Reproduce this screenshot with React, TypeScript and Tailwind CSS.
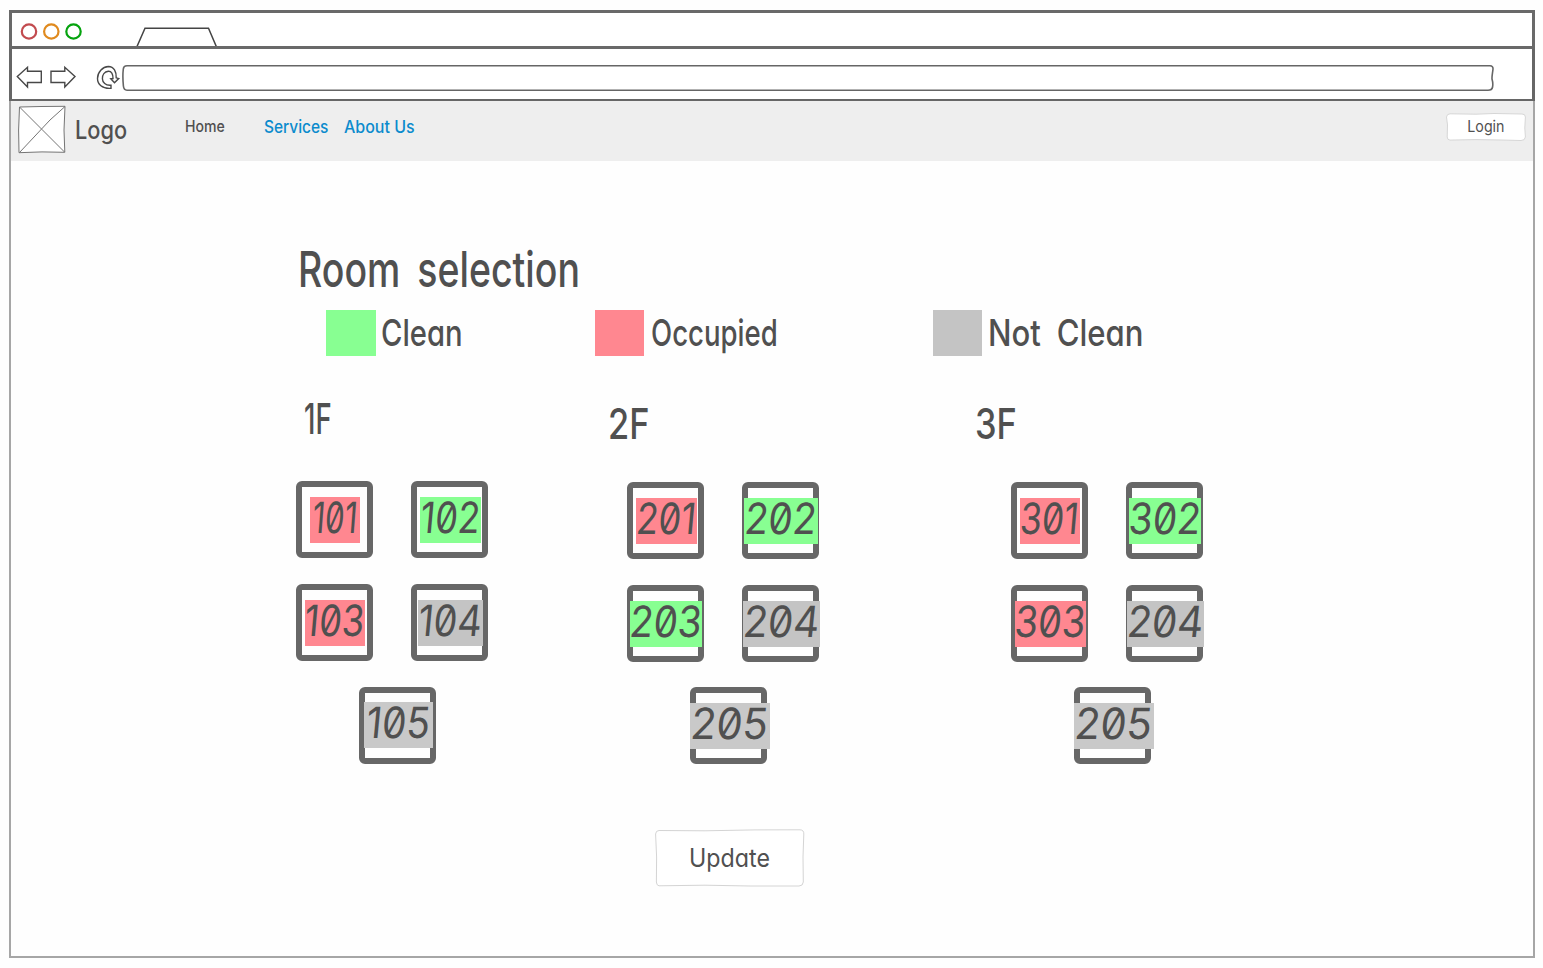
import React from "react";

type Tone = "clean" | "occupied" | "dirty" | "dirtyLight";

const tones: Record<Tone, string> = {
  clean: "bg-[#88ff92]",
  occupied: "bg-[#ff8790]",
  dirty: "bg-[#c4c4c4]",
  dirtyLight: "bg-[#c9c9c9]",
};

type Room = { no: string; tone: Tone; tag: string; text: string };
type Floor = { name: string; col: string; label: string; rooms: Room[]; last: Room; grid: string };

const W1 = "scale-x-[0.72]";
const W2 = "scale-x-[0.84]";
const W3 = "scale-x-[0.9]";

const floors: Floor[] = [
  {
    name: "1F",
    col: "w-[331px]",
    label: "ml-[8px] -mt-[4px] scale-x-[0.64]",
    grid: "pt-[80px] gap-y-[26px]",
    rooms: [
      { no: "101", tone: "occupied", tag: "ml-[8px] w-[50px]", text: W1 },
      { no: "102", tone: "clean", tag: "ml-[3px] w-[61px]", text: W2 },
      { no: "103", tone: "occupied", tag: "ml-[3px] w-[60px]", text: W2 },
      { no: "104", tone: "dirty", tag: "ml-[1px] w-[65px]", text: "scale-x-[0.88]" },
    ],
    last: { no: "105", tone: "dirtyLight", tag: "-ml-[1px] w-[69px]", text: "scale-x-[0.9]" },
  },
  {
    name: "2F",
    col: "w-[384px]",
    label: "-ml-[19px] pt-px scale-x-[0.8]",
    grid: "pt-[81px] gap-y-[26px]",
    rooms: [
      { no: "201", tone: "occupied", tag: "ml-[3px] w-[61px]", text: W2 },
      { no: "202", tone: "clean", tag: "-ml-[4px] w-[74px]", text: W3 },
      { no: "203", tone: "clean", tag: "-ml-[3px] w-[72px]", text: W3 },
      { no: "204", tone: "dirty", tag: "-ml-[5px] w-[77px]", text: "scale-x-[0.94]" },
    ],
    last: { no: "205", tone: "dirtyLight", tag: "-ml-[6px] w-[80px]", text: "scale-x-[0.97]" },
  },
  {
    name: "3F",
    col: "w-[200px]",
    label: "-ml-[36px] pt-px scale-x-[0.8]",
    grid: "pt-[81px] gap-y-[26px]",
    rooms: [
      { no: "301", tone: "occupied", tag: "ml-[3px] w-[60px]", text: "scale-x-[0.82]" },
      { no: "302", tone: "clean", tag: "-ml-[3px] w-[72px]", text: W3 },
      { no: "303", tone: "occupied", tag: "-ml-[2px] w-[71px]", text: "scale-x-[0.88]" },
      { no: "204", tone: "dirty", tag: "-ml-[5px] w-[77px]", text: "scale-x-[0.94]" },
    ],
    last: { no: "205", tone: "dirtyLight", tag: "-ml-[6px] w-[80px]", text: "scale-x-[0.97]" },
  },
];

function RoomBox({ room, shift = "pt-[10px]" }: { room: Room; shift?: string }) {
  return (
    <div className={`h-[77px] w-[77px] rounded-[6px] border-[6px] border-[#676767] ${shift}`}>
      <div className={`flex h-[46px] items-center justify-center pb-[5px] ${room.tag} ${tones[room.tone]}`}>
        <span className={`text-[43px] leading-none ${room.text} -skew-x-6`}>{room.no}</span>
      </div>
    </div>
  );
}

function FloorColumn({ floor }: { floor: Floor }) {
  const first = floor.name === "1F";
  return (
    <section className={`shrink-0 ${floor.col}`}>
      <div className="flex h-0 items-start">
        <h2 className={`w-[90px] shrink-0 origin-left text-[43px] font-medium leading-none ${floor.label}`}>{floor.name}</h2>
      </div>
      <div className={`grid grid-cols-[77px_77px] gap-x-[38px] ${floor.grid}`}>
        {floor.rooms.map((r) => (
          <RoomBox key={r.no} room={r} />
        ))}
      </div>
      <div className={first ? "pl-[63px] pt-[26px]" : "pl-[63px] pt-[25px]"}>
        <RoomBox room={floor.last} shift={first ? "pt-[9px]" : "pt-[10px]"} />
      </div>
    </section>
  );
}

function Legend({ tone, label, box, text }: { tone: Tone; label: string; box: string; text: string }) {
  return (
    <div className={`flex h-[46px] shrink-0 items-center ${box}`}>
      <div className={`h-[46px] w-[49.5px] shrink-0 ${tones[tone]}`} />
      <span className={`-mt-[2px] origin-left whitespace-nowrap text-[37px] font-medium leading-none ${text}`}>{label}</span>
    </div>
  );
}

export default function App() {
  return (
    <div className="h-[968px] w-[1543px] overflow-hidden bg-[#fefefe] pl-[9px] pt-[10px] text-[#505050] [font-family:Inter,'Open_Sans',sans-serif] [font-feature-settings:'zero','cv11']">
      <div className="flex h-[948px] w-[1526px] flex-col">
        <div className="flex h-[39px] shrink-0 items-end border-[3px] border-[#696969] bg-white">
          <svg width="64" height="33" viewBox="0 0 64 33" fill="none" strokeWidth="2.2" className="ml-[6px]">
            <circle cx="11" cy="18.5" r="7.2" stroke="#c24b4f" />
            <circle cx="33.3" cy="18.5" r="7.2" stroke="#e08a1e" />
            <circle cx="55.5" cy="18.5" r="7.2" stroke="#05a30e" />
          </svg>
          <svg width="84" height="33" viewBox="0 0 84 33" fill="none" className="ml-[52px]">
            <path d="M3 33.5 11 15.3H74.5L82.3 33.5" stroke="#444" strokeWidth="1.5" />
          </svg>
        </div>
        <div className="flex h-[52px] shrink-0 border-x-[3px] border-b-[2px] border-[#666] bg-white">
          <svg width="110" height="50" viewBox="12 49 110 50" fill="none" stroke="#484848" strokeWidth="1.4" className="shrink-0">
            <path d="M17.3 76.5 27.5 67.3v4H41.3V82.5H27.5V87Z" />
            <path d="M75 76.5 64.8 67.3v4H51V82.5H64.8V87Z" />
            <path d="M111 88.3C102 89 97.5 84 97.5 78.5C97.5 72 102.5 66.8 108.5 66.5C114 66.5 116.5 72 116.2 77.8L118.7 78.5 114.5 82.7 110.8 78.7 113 78.5C113 73.8 111.5 71.2 108.3 71.3C104.5 71.7 102.3 75 102.4 78.8C102.5 82.5 105.5 85.7 111 85.2Z" />
          </svg>
          <svg width="1373" height="28" viewBox="0 0 1373 28" fill="white" stroke="#666" strokeWidth="1.6" className="mt-[15px] shrink-0">
            <path d="M5 1.8H1368Q1371.2 2 1371 5C1370.6 9 1369.8 12 1370 15Q1371.2 19 1370.6 23Q1370 26.2 1366 26.2H5Q1.8 26.2 1.4 22C.8 16 .6 11 1.3 5Q1.6 1.8 5 1.8Z" />
          </svg>
        </div>
        <div className="flex min-h-0 flex-1 flex-col border-x-2 border-b-2 border-[#a6a6a6]">
          <header className="flex h-[60px] shrink-0 bg-[#eee] pl-[7px]">
            <svg width="49" height="50" viewBox="18 105 49 50" fill="white" stroke="#757575" strokeWidth="1" className="mt-[4px] shrink-0">
              <path d="M19.5 107 41 106.5 65 106.3 64 130 64.8 152.3 42 151.9 19 152.7 18.6 130Z" />
              <path d="M19.5 107 42 129.5 64.5 152M65 106.5 50 120 19.5 152.5" fill="none" />
            </svg>
            <div className="w-[118px] pl-[8px] pt-[17px]">
              <span className="inline-block origin-left scale-x-[0.87] text-[25px] font-medium leading-none">Logo</span>
            </div>
            <nav className="flex pt-[17px] text-[17px] font-medium leading-none text-[#0b8bcd]">
              <a className="w-[79px] text-[16px] text-[#505050]"><span className="inline-block origin-left scale-x-[0.88]">Home</span></a>
              <a className="w-[80px] pt-px"><span className="inline-block origin-left scale-x-[0.91]">Services</span></a>
              <a className="w-[90px] whitespace-nowrap pt-px"><span className="inline-block origin-left scale-x-[0.94]">About Us</span></a>
            </nav>
            <button className="relative ml-auto mr-[7px] mt-[12px] flex h-[28px] w-[80px] items-center justify-center text-[16px] leading-none">
              <svg width="80" height="28" viewBox="0 0 80 28" fill="white" stroke="#d6d6d6" className="absolute inset-0">
                <path d="M4 .8 30 1.2 48 .5 76 1Q79.4 1 79.4 4L78.8 15 79.4 24Q79 27.6 75 27.5L55 27 30 26.6 4 27.1Q1.3 27 1.2 24L1.5 12 .5 4Q.8 1 4 .8Z" />
              </svg>
              <span className="relative -mt-[2px] scale-x-[0.89]">Login</span>
            </button>
          </header>
          <main className="flex flex-1 flex-col bg-[#fefefe] pl-[285px]">
            <div className="h-[149px] shrink-0 pl-[2px] pt-[84px]">
              <h1 className="w-[500px] origin-left scale-x-[0.765] whitespace-nowrap text-[49px] font-medium leading-none [word-spacing:9px]">Room selection</h1>
            </div>
            <div className="flex h-[91px] shrink-0 pl-[30px]">
              <Legend tone="clean" label="Clean" box="w-[268.5px]" text="ml-[5.5px] scale-x-[0.79]" />
              <Legend tone="occupied" label="Occupied" box="w-[338px]" text="ml-[7px] scale-x-[0.745]" />
              <Legend tone="dirty" label="Not Clean" box="w-[300px]" text="ml-[6px] scale-x-[0.84] [word-spacing:9px]" />
            </div>
            <div className="flex h-[428px] shrink-0 items-start">
              {floors.map((f) => (
                <FloorColumn key={f.name} floor={f} />
              ))}
            </div>
            <div className="pl-[359px]">
              <button className="relative flex h-[58px] w-[150px] items-center justify-center text-[25px] leading-none">
                <svg width="150" height="58" viewBox="0 0 150 58" fill="white" stroke="#d4d4d4" className="absolute inset-0">
                  <path d="M4 1.5 50 1.8 100 .9 145 .8Q149 1 148.8 5L148 28 148.3 53Q148 57 144 57L95 57 50 56.2 4 56.8Q1.5 56.5 1.4 53L1.6 28 .6 5Q.8 1.6 4 1.5Z" />
                </svg>
                <span className="relative scale-x-[0.93]">Update</span>
              </button>
            </div>
          </main>
        </div>
      </div>
    </div>
  );
}
